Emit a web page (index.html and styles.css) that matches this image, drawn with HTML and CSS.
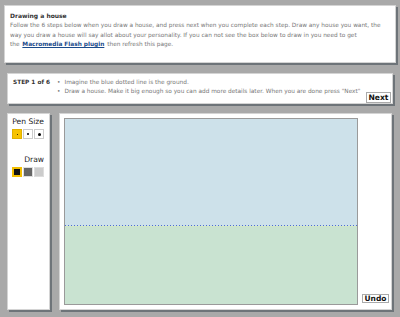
FILE: index.html
```html
<!DOCTYPE html>
<html>
<head>
<meta charset="utf-8">
<link rel="stylesheet" href="styles.css">
</head>
<body>
<div class="page">
  <div class="intro panel">
    <div class="title">Drawing a house</div>
    <p class="desc">Follow the 6 steps below when you draw a house, and press next when you complete each step. Draw any house you want, the way you draw a house will say allot about your personality. If you can not see the box below to draw in you need to get <span class="nowrap">the <a class="link" href="#">Macromedia Flash plugin</a></span> then refresh this page.</p>
  </div>
  <div class="step panel">
    <div class="step-label">STEP 1 of 6</div>
    <ul class="step-list">
      <li>Imagine the blue dotted line is the ground.</li>
      <li>Draw a house. Make it big enough so you can add more details later. When you are done press "Next"</li>
    </ul>
    <div class="btn next-btn">Next</div>
  </div>
  <div class="main">
    <div class="tools panel">
      <div class="tool-label">Pen Size</div>
      <div class="swatches">
        <div class="sw sw-yellow"><span class="dot d1"></span></div>
        <div class="sw"><span class="dot d2"></span></div>
        <div class="sw"><span class="dot d3"></span></div>
      </div>
      <div class="tool-label draw-label">Draw</div>
      <div class="swatches">
        <div class="sw sw-black"></div>
        <div class="sw sw-dark"></div>
        <div class="sw sw-light"></div>
      </div>
    </div>
    <div class="canvas-panel panel">
      <div class="canvas">
        <div class="sky"></div>
        <div class="ground-line"></div>
        <div class="ground"></div>
      </div>
      <div class="undo-row"><div class="btn undo-btn">Undo</div></div>
    </div>
  </div>
</div>
</body>
</html>
```
FILE: styles.css
```css
* { box-sizing: border-box; }
html, body { margin: 0; padding: 0; }
body {
  background: #a9a9a9;
  width: 400px;
  height: 317px;
  overflow: hidden;
  font-family: "DejaVu Sans", Verdana, sans-serif;
}
.page { padding: 5px 4px 0 4px; }
.panel {
  background: #fff;
  border: 1px solid #d4d4d4;
  box-shadow: 2px 2px 0 #6e7479;
}
.intro {
  width: 392px;
  height: 58px;
  padding: 5px 5px;
}
.title {
  font-size: 6px;
  font-weight: bold;
  color: #333;
  line-height: 10px;
}
.desc {
  margin: 0;
  font-size: 5.8px;
  line-height: 9.5px;
  color: #777;
}
.nowrap { white-space: nowrap; }
.link {
  color: #1a4a8a;
  font-weight: bold;
  text-decoration: underline;
  margin: 0 1px;
}
.step {
  margin: 10px 3px 0 3px;
  height: 31px;
  display: flex;
  position: relative;
  padding: 4px 5px;
}
.step-label {
  font-size: 5.8px;
  font-weight: bold;
  color: #333;
  width: 44px;
  line-height: 9px;
}
.step-list {
  margin: 0;
  padding: 0;
  list-style: none;
  font-size: 5.8px;
  line-height: 9px;
  color: #777;
}
.step-list li::before { content: "•"; margin-right: 4px; color: #777; }
.btn {
  background: #fff;
  border: 1px solid #aaa;
  font-weight: bold;
  color: #111;
  text-align: center;
}
.next-btn {
  position: absolute;
  right: 1px;
  bottom: 0;
  width: 25px;
  height: 11px;
  font-size: 7.6px;
  line-height: 9px;
}
.main {
  display: flex;
  gap: 9px;
  margin: 9px 4px 0 3px;
}
.tools {
  width: 43px;
  height: 197px;
  padding: 3px 5px 0 4px;
}
.tool-label {
  font-size: 7.6px;
  color: #222;
  text-align: right;
  line-height: 10px;
  white-space: nowrap;
}
.draw-label { margin-top: 16px; }
.swatches {
  display: flex;
  gap: 1px;
  margin-top: 2px;
}
.sw {
  width: 10px;
  height: 10px;
  border: 1px solid #ccc;
  background: #fff;
  display: flex;
  align-items: center;
  justify-content: center;
}
.sw-yellow { background: #f7c300; border-color: #e0b000; }
.sw-black { background: #111; border: 2px solid #f2be00; }
.sw-dark { background: #666; border-color: #ddd; }
.sw-light { background: #ccc; border-color: #ddd; }
.dot { background: #000; border-radius: 50%; display: block; }
.d1 { width: 1px; height: 1px; }
.d2 { width: 2px; height: 2px; }
.d3 { width: 3px; height: 3px; }
.canvas-panel {
  flex: 1;
  height: 197px;
  padding: 4px 0 0 4px;
  display: flex;
  flex-direction: column;
}
.canvas {
  width: 294px;
  height: 187px;
  border: 1px solid #9a9a9a;
  display: flex;
  flex-direction: column;
}
.sky {
  height: 106px;
  background: #cde1ea;
}
.ground-line {
  height: 1px;
  background: #cde1ea repeating-linear-gradient(to right, #4d6ed2 0 1px, #cde1ea 1px 3px);
}
.ground {
  flex: 1;
  background: #c9e3d1;
  border-top: 1px solid #d2e6c4;
}
.undo-row {
  display: flex;
  justify-content: flex-end;
  margin-top: -11px;
  padding-right: 2px;
}
.undo-btn {
  width: 27px;
  height: 9px;
  font-size: 7.5px;
  line-height: 7px;
}
```
